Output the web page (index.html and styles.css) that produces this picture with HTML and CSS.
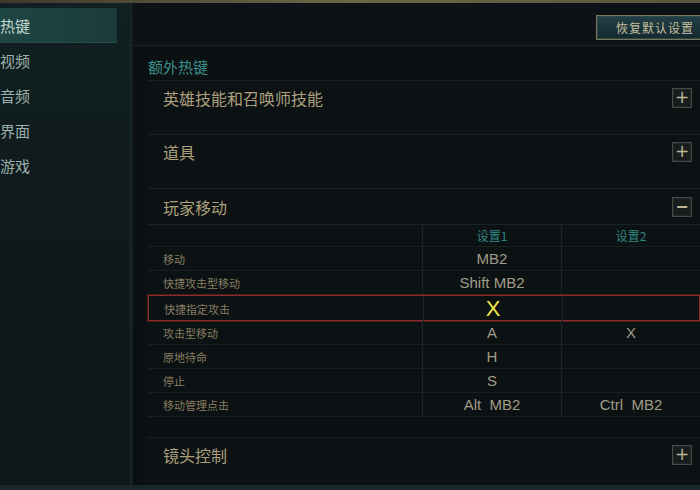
FILE: index.html
```html
<!DOCTYPE html>
<html lang="zh">
<head>
<meta charset="utf-8">
<title>热键设置</title>
<link rel="stylesheet" href="styles.css">
</head>
<body>
<div class="topbar"></div>
<div class="app">
  <nav class="sidebar">
    <div class="nav-item active"><span>热键</span></div>
    <div class="nav-item"><span>视频</span></div>
    <div class="nav-item"><span>音频</span></div>
    <div class="nav-item"><span>界面</span></div>
    <div class="nav-item"><span>游戏</span></div>
  </nav>
  <div class="divider"></div>
  <main class="main">
    <div class="main-head">
      <button class="reset-btn">恢复默认设置</button>
    </div>
    <div class="content">
      <div class="group-title">额外热键</div>
      <section class="section collapsed">
        <div class="sec-head"><span class="sec-title">英雄技能和召唤师技能</span><span class="toggle">+</span></div>
      </section>
      <section class="section collapsed">
        <div class="sec-head"><span class="sec-title">道具</span><span class="toggle">+</span></div>
      </section>
      <section class="section open">
        <div class="sec-head"><span class="sec-title">玩家移动</span><span class="toggle minus">−</span></div>
        <div class="table">
          <div class="row head"><div class="c-label"></div><div class="c-key">设置1</div><div class="c-key">设置2</div></div>
          <div class="row"><div class="c-label">移动</div><div class="c-key">MB2</div><div class="c-key"></div></div>
          <div class="row"><div class="c-label">快捷攻击型移动</div><div class="c-key">Shift MB2</div><div class="c-key"></div></div>
          <div class="row hl"><div class="c-label">快捷指定攻击</div><div class="c-key big">X</div><div class="c-key"></div></div>
          <div class="row"><div class="c-label">攻击型移动</div><div class="c-key">A</div><div class="c-key">X</div></div>
          <div class="row"><div class="c-label">原地待命</div><div class="c-key">H</div><div class="c-key"></div></div>
          <div class="row"><div class="c-label">停止</div><div class="c-key">S</div><div class="c-key"></div></div>
          <div class="row"><div class="c-label">移动管理点击</div><div class="c-key">Alt&nbsp; MB2</div><div class="c-key">Ctrl&nbsp; MB2</div></div>
        </div>
      </section>
      <section class="section last">
        <div class="sec-head"><span class="sec-title">镜头控制</span><span class="toggle">+</span></div>
      </section>
    </div>
  </main>
</div>
<div class="bottombar"></div>
</body>
</html>
```

FILE: styles.css
```css
* { box-sizing: border-box; }
html, body {
  margin: 0;
  padding: 0;
  width: 700px;
  height: 490px;
  overflow: hidden;
  background: #0b1013;
  font-family: "Noto Sans CJK SC", "Noto Sans", sans-serif;
}
.topbar {
  height: 3px;
  background: linear-gradient(to right, #3d3a2c, #6d6748 50%, #5a553c);
}
.app {
  display: flex;
  height: 482px;
}
.sidebar {
  width: 130px;
  background: linear-gradient(to bottom, #112022, #0f1a1c 40%, #0e1719);
  padding-top: 5px;
  padding-right: 13px;
}
.nav-item {
  height: 35px;
  display: flex;
  align-items: center;
  font-size: 15px;
  color: #9cb1ac;
}
.nav-item.active {
  background: linear-gradient(to right, #1e4644, #1b3b3b);
  color: #c5d6d0;
  border-bottom: 1px solid #284a48;
}
.divider {
  width: 3px;
  background: #141e21;
  border-left: 1px solid #1c2a2c;
}
.main {
  flex: 1;
  display: flex;
  flex-direction: column;
  background: #0b1013;
}
.main-head {
  height: 43px;
  display: flex;
  justify-content: flex-end;
  align-items: flex-start;
  padding-top: 12px;
  border-bottom: 1px solid #1a2428;
  background: #0c1215;
}
.reset-btn {
  width: 106px;
  height: 25px;
  margin-right: -2px;
  border: 1px solid #7c7656;
  background: linear-gradient(to bottom, #234046, #12292d);
  color: #c6bf9f;
  font-family: "Noto Sans CJK SC", sans-serif;
  font-size: 12px;
  letter-spacing: 1px;
  text-align: left;
  padding: 0 0 0 19px;
  box-shadow: inset 0 0 0 1px #2c4a4c;
}
.content {
  flex: 1;
  padding: 11px 0 0 15px;
}
.group-title {
  font-size: 15px;
  line-height: 20px;
  color: #3d8f8a;
  margin-bottom: 3px;
}
.section {
  border-top: 1px solid #182126;
  background: #0c1114;
}
.section.collapsed { height: 54px; }
.section.last { margin-top: 20px; height: 45px; }
.sec-head {
  height: 33px;
  display: flex;
  align-items: center;
  justify-content: space-between;
  padding: 0 8px 0 15px;
}
.section.open .sec-head { height: 35px; }
.sec-title {
  font-size: 16px;
  color: #ada07c;
  font-weight: normal;
}
.toggle {
  width: 20px;
  height: 20px;
  border: 1px solid #474b48;
  background: #181c1d;
  color: #bdb596;
  font-family: "DejaVu Sans", sans-serif;
  font-size: 17px;
  line-height: 17px;
  text-align: center;
  box-shadow: inset 0 0 0 1px #222626;
}
.toggle.minus { font-size: 16px; font-weight: bold; }
.table {
  border-top: 1px solid #1a2428;
}
.row {
  display: grid;
  grid-template-columns: 274px 139px 1fr;
  height: 24px;
  border-bottom: 1px solid #182024;
}
.row.head { height: 22px; }
.row > div {
  display: flex;
  align-items: center;
}
.c-label {
  padding-left: 15px;
  font-size: 11px;
  color: #877e60;
}
.c-key {
  justify-content: center;
  border-left: 1px solid #1c2529;
  font-family: "Liberation Sans", "Noto Sans CJK SC", sans-serif;
  font-size: 15px;
  color: #a09c88;
}
.row.head .c-key {
  font-family: "Noto Sans CJK SC", sans-serif;
  font-size: 12px;
  color: #2f8884;
}
.row.hl {
  height: 26px;
  border: 1px solid #8c2f2c;
  box-shadow: 0 0 0 1px #4a1c1a;
}
.row.hl .c-key { border-left-color: #1a2226; }
.c-key.big {
  font-size: 22px;
  color: #f0e84a;
}
.bottombar {
  height: 5px;
  background: #1a2729;
}
```
